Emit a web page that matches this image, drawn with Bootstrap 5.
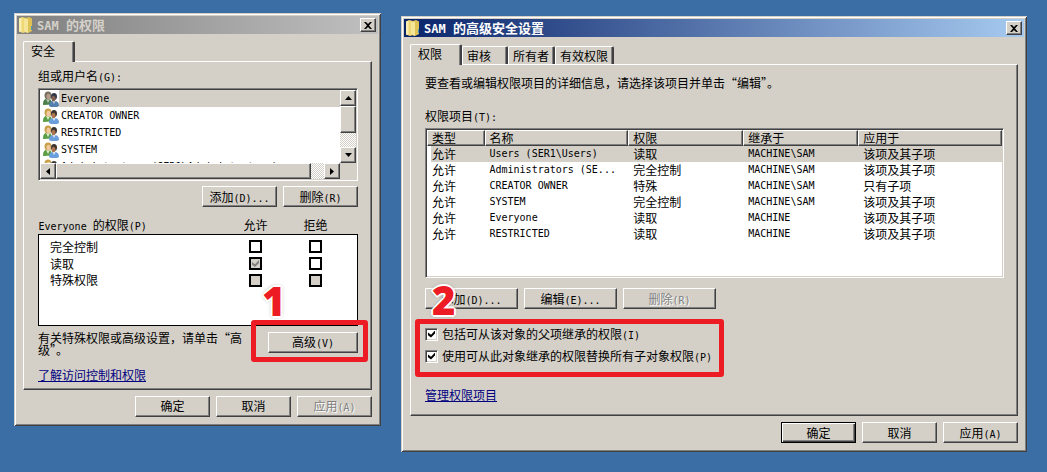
<!DOCTYPE html>
<html lang="zh-CN">
<head>
<meta charset="utf-8">
<meta name="viewport" content="width=device-width, initial-scale=1">
<title>SAM 的权限</title>
<link href="https://cdn.jsdelivr.net/npm/bootstrap@5.3.0/dist/css/bootstrap.min.css" rel="stylesheet">
<style>
  :root { --face:#d4d0c8; --mid:#808080; --dark:#404040; --red:#ed1c24; }
  body { background:#3a6ea5; color:#000; font-family:"Noto Sans CJK SC",sans-serif; font-size:12px; line-height:16px; }
  .desktop { display:grid; grid-template-columns:367fr 626fr; gap:20px; padding:13px 20px 19px 14px; align-items:start; }
  .latin { font-family:"DejaVu Sans Mono","Liberation Mono",monospace; font-size:10px; line-height:1; }
  .dialog { background:var(--face); padding:3px 3px 9px; border:0 solid; min-width:0;
    box-shadow:inset 1px 1px var(--face),inset -1px -1px var(--dark),inset 2px 2px #fff,inset -2px -2px var(--mid); }
  .dialog-second { margin-top:3px; }
  .titlebar { height:18px; padding:0 2px; font-size:13px; font-weight:700; color:var(--face); background:linear-gradient(90deg,#808080,#c0c0c0); }
  .titlebar .latin { font-size:12px; white-space:pre; }
  .titlebar.current { color:#fff; background:linear-gradient(90deg,#0a246a,#a6caf0); }
  .titlebar h1 { font:inherit; line-height:18px; }
  .folder { width:14px; height:16px; flex:none; }
  .closer { width:16px; height:14px; }
  .raised, .btn.raised { background:var(--face); color:#000; border:1px solid; border-color:#fff var(--dark) var(--dark) #fff;
    border-radius:0; box-shadow:inset -1px -1px var(--mid); padding:0; display:flex; align-items:center; justify-content:center; flex:none; }
  .btn.push { width:75px; height:21px; font-size:12px; line-height:16px; }
  .btn.push-mid { width:93px; }
  .btn.push-adv { width:90px; }
  .btn.raised:disabled { color:var(--mid); text-shadow:1px 1px #fff; opacity:1; border-color:#fff var(--dark) var(--dark) #fff; }
  .btn.preset { border-color:#000; box-shadow:inset 1px 1px #fff,inset -1px -1px var(--dark),inset -2px -2px var(--mid); }
  .tabs { margin:7px 6px 0; height:20px; }
  .tab-head { position:relative; background:var(--face); border:solid; border-width:1px 2px 0 1px; border-color:#fff var(--dark) #fff #fff;
    border-radius:2px 2px 0 0; margin:2px 0 0; padding:0 4px; min-width:46px; text-align:left; color:#000; box-shadow:inset -1px 0 var(--mid); }
  .tab-head.active { margin:0 0 -1px; padding:0 7px 2px; min-width:52px; z-index:1; }
  .pane { margin:0 6px 6px; border:1px solid; border-color:#fff var(--dark) var(--dark) #fff; box-shadow:inset -1px -1px var(--mid); padding:6px 13px 6px 14px; }
  .pane-wide { padding:10px 13px 12px 14px; }
  .sunken { background:#fff; border:1px solid; border-color:var(--mid) #fff #fff var(--mid);
    box-shadow:inset 1px 1px var(--dark),inset -1px -1px var(--face); padding:1px; }
  .users { height:73px; overflow:hidden; }
  .users li { height:17px; white-space:nowrap; display:flex; align-items:center; }
  .users li > span { flex:1; padding-left:2px; line-height:17px; }
  .users .chosen > span, .entries .chosen td { background:var(--face); }
  .users svg { width:16px; height:16px; margin-left:3px; flex:none; }
  .track { background:repeating-conic-gradient(#fff 0 25%,var(--face) 0 50%) 0 0/2px 2px; }
  .arrow { width:16px; height:16px; }
  .thumb-v { height:27px; }
  .thumb-h { height:16px; width:85%; }
  .corner { width:16px; background:var(--face); }
  .rights { width:100%; border-collapse:collapse; margin-top:9px; table-layout:fixed; }
  .rights th { font-weight:400; height:18px; padding:0; }
  .rights th:nth-child(n+2), .rights td { text-align:center; }
  .rights tbody th { padding-left:11px; height:17px; }
  .rights td { padding:0; height:17px; line-height:0; }
  .rights tbody { background:#fff; border:1px solid #000; }
  .rights col.mark-col { width:60px; }
  .rights col.end { width:12px; }
  .rights tbody tr:first-child > * { padding-top:4px; height:21px; }
  .rights tbody tr:last-child > * { padding-bottom:36px; height:53px; }
  .tick { appearance:none; width:13px; height:13px; margin:0; background:#fff; border:2px solid #000; display:inline-grid; place-items:center; flex:none; }
  .tick:disabled { background:var(--face); }
  .tick:checked::before { content:""; width:7px; height:7px; background:#000; clip-path:polygon(0 28%,43% 62%,100% 0,100% 43%,43% 100%,0 68%); }
  .tick:checked:disabled::before { background:var(--mid); }
  .tick-3d { border:1px solid; border-color:var(--mid) #fff #fff var(--mid); box-shadow:inset 1px 1px var(--dark),inset -1px -1px var(--face); }
  .hint { line-height:12px; max-width:210px; }
  .dialog a { color:#000080; }
  .ringed { position:relative; }
  .ringed::after { content:""; position:absolute; border:5px solid var(--red); border-radius:3px; pointer-events:none; inset:-12px -10px -9px -17px; }
  .ringed-wide { width:289px; max-width:100%; }
  .ringed-wide::after { inset:-7px -10px -13px; }
  .step { position:absolute; font:800 40px/40px "Open Sans",sans-serif; color:var(--red); z-index:2;
    text-shadow:2px 0 #fff,-2px 0 #fff,0 2px #fff,0 -2px #fff,1px 1px #fff,-1px -1px #fff,1px -1px #fff,-1px 1px #fff,0 0 4px #777; }
  .step-one { left:-6px; top:-51px; }
  .step-two { left:7px; top:-46px; }
  .listing { height:150px; margin-top:4px; }
  .entries { width:100%; table-layout:fixed; border-collapse:separate; border-spacing:0; }
  .entries th, .entries td { height:16px; line-height:16px; padding:0 0 0 5px; white-space:nowrap; overflow:hidden; font-weight:400; }
  .entries th { background:var(--face); border:1px solid; border-color:#fff var(--dark) var(--dark) #fff; box-shadow:inset -1px -1px var(--mid); padding-left:4px; line-height:14px; }
  .entries td:first-child { border-left:4px solid #fff; padding-left:1px; }
  .gap-6 { gap:6px; }
  .foot { padding:0 6px; }
  .after-list { margin-top:5px; }
  .after-rights { margin-top:6px; }
  .after-listing { margin-top:10px; }
  .mt-lead { margin-top:17px; }
  .mt-link { margin-top:11px; }
  .mt-link-wide { margin-top:23px; }
</style>
</head>
<body>
<svg class="d-none" aria-hidden="true">
  <symbol id="folder" viewBox="0 0 14 16">
    <path d="M0 1.500 3 0l4 1v14l-3 1-4-1.500z" fill="#eed873"/><path d="M0 1.500 2.500 1v14L0 14.500z" fill="#f8eeb0"/>
    <path d="M5 1.500 10 0l3 1.500V14l-4 2-4-1.500z" fill="#dfc255"/><path d="M5 1.500l4 .5v14l-4-1.500z" fill="#f5e596"/>
    <path d="M12 9h1v4h-1z" fill="#4f9bb5"/>
  </symbol>
  <symbol id="pair" viewBox="0 0 16 16">
    <path d="M0 14c0-4 1-6 4-6.500 3 0 5 1 5 6z" fill="#5c9e45"/><path d="M3 8l2 4 2-4z" fill="#dcecd0"/>
    <ellipse cx="5" cy="4.500" rx="3.500" ry="4" fill="#c8a048"/><ellipse cx="5.500" cy="5.500" rx="2" ry="2.800" fill="#f0c9a0"/>
    <path d="M6 15c0-4 2-5 5-5s5 1 5 5l-2 1H8z" fill="#6a9fdb"/><path d="M9.500 10l1.500 3 1.500-3z" fill="#e4effb"/>
    <ellipse cx="11" cy="5.500" rx="3" ry="3.500" fill="#3c3430"/><ellipse cx="10.500" cy="7.500" rx="2" ry="2.700" fill="#ad7650"/>
  </symbol>
  <symbol id="pair-dim" viewBox="0 0 16 16">
    <path d="M0 14c0-4 1-6 4-6.500 3 0 5 1 5 6z" fill="#4c7f4b"/><path d="M3 8l2 4 2-4z" fill="#b9c9b8"/>
    <ellipse cx="5" cy="4.500" rx="3.500" ry="4" fill="#77715f"/><ellipse cx="5.500" cy="5.500" rx="2" ry="2.800" fill="#b59c8b"/>
    <path d="M6 15c0-4 2-5 5-5s5 1 5 5l-2 1H8z" fill="#557fad"/><path d="M9.500 10l1.500 3 1.500-3z" fill="#c4d2e3"/>
    <ellipse cx="11" cy="5.500" rx="3" ry="3.500" fill="#343948"/><ellipse cx="10.500" cy="7.500" rx="2" ry="2.700" fill="#82604f"/>
  </symbol>
  <symbol id="cross" viewBox="0 0 8 7"><path d="M0 0h2l2 2 2-2h2L5 3.500 8 7H6L4 5 2 7H0l3-3.500z"/></symbol>
</svg>

<main class="desktop">
  <section class="dialog" aria-labelledby="t1">
    <header class="titlebar d-flex align-items-center">
      <svg class="folder me-1"><use href="#folder"/></svg>
      <h1 class="m-0 me-auto" id="t1"><span class="latin">SAM </span>的权限</h1>
      <button class="btn raised closer" aria-label="关闭"><svg width="8" height="7"><use href="#cross"/></svg></button>
    </header>
    <div class="tabs d-flex" role="tablist"><button class="tab-head active" role="tab">安全</button></div>
    <div class="pane">
      <div>组或用户名<span class="latin">(G):</span></div>
      <div class="sunken mt-1">
        <div class="d-flex">
          <ul class="users list-unstyled m-0 flex-grow-1">
            <li class="chosen"><svg><use href="#pair-dim"/></svg><span class="latin">Everyone</span></li>
            <li><svg><use href="#pair"/></svg><span class="latin">CREATOR OWNER</span></li>
            <li><svg><use href="#pair"/></svg><span class="latin">RESTRICTED</span></li>
            <li><svg><use href="#pair"/></svg><span class="latin">SYSTEM</span></li>
            <li><svg><use href="#pair"/></svg><span class="latin">Administrators (SER1\Administrators)</span></li>
          </ul>
          <div class="track d-flex flex-column">
            <button class="raised arrow" aria-label="向上"><svg width="7" height="4"><path d="M0 4 3.500 0 7 4z"/></svg></button>
            <div class="raised thumb-v"></div>
            <button class="raised arrow mt-auto" aria-label="向下"><svg width="7" height="4"><path d="M0 0h7L3.500 4z"/></svg></button>
          </div>
        </div>
        <div class="d-flex">
          <div class="track d-flex flex-grow-1">
            <button class="raised arrow" aria-label="向左"><svg width="4" height="7"><path d="M4 0v7L0 3.500z"/></svg></button>
            <div class="raised thumb-h"></div>
            <button class="raised arrow ms-auto" aria-label="向右"><svg width="4" height="7"><path d="M0 0v7l4-3.500z"/></svg></button>
          </div>
          <div class="corner"></div>
        </div>
      </div>
      <div class="d-flex justify-content-end gap-6 after-list">
        <button class="btn raised push"><span>添加<span class="latin">(D)...</span></span></button>
        <button class="btn raised push"><span>删除<span class="latin">(R)</span></span></button>
      </div>
      <table class="rights">
        <colgroup><col><col class="mark-col"><col class="mark-col"><col class="end"></colgroup>
        <thead><tr><th scope="col"><span class="latin">Everyone </span>的权限<span class="latin">(P)</span></th><th scope="col">允许</th><th scope="col">拒绝</th><td></td></tr></thead>
        <tbody>
          <tr><th scope="row">完全控制</th><td><input class="tick" type="checkbox" aria-label="完全控制 允许"></td><td><input class="tick" type="checkbox" aria-label="完全控制 拒绝"></td><td></td></tr>
          <tr><th scope="row">读取</th><td><input class="tick" type="checkbox" checked disabled aria-label="读取 允许"></td><td><input class="tick" type="checkbox" aria-label="读取 拒绝"></td><td></td></tr>
          <tr><th scope="row">特殊权限</th><td><input class="tick" type="checkbox" disabled aria-label="特殊权限 允许"></td><td><input class="tick" type="checkbox" disabled aria-label="特殊权限 拒绝"></td><td></td></tr>
        </tbody>
      </table>
      <div class="d-flex justify-content-between align-items-start after-rights">
        <div class="hint">有关特殊权限或高级设置，请单击“高级”。</div>
        <div class="ringed">
          <button class="btn raised push push-adv"><span>高级<span class="latin">(V)</span></span></button>
          <span class="step step-one">1</span>
        </div>
      </div>
      <div class="mt-link"><a href="#">了解访问控制和权限</a></div>
    </div>
    <footer class="d-flex justify-content-end gap-6 foot">
      <button class="btn raised push">确定</button>
      <button class="btn raised push">取消</button>
      <button class="btn raised push" disabled><span>应用<span class="latin">(A)</span></span></button>
    </footer>
  </section>

  <section class="dialog dialog-second" aria-labelledby="t2">
    <header class="titlebar current d-flex align-items-center">
      <svg class="folder me-1"><use href="#folder"/></svg>
      <h1 class="m-0 me-auto" id="t2"><span class="latin">SAM </span>的高级安全设置</h1>
      <button class="btn raised closer" aria-label="关闭"><svg width="8" height="7"><use href="#cross"/></svg></button>
    </header>
    <div class="tabs d-flex" role="tablist">
      <button class="tab-head active" role="tab">权限</button>
      <button class="tab-head" role="tab">审核</button>
      <button class="tab-head" role="tab">所有者</button>
      <button class="tab-head" role="tab">有效权限</button>
    </div>
    <div class="pane pane-wide">
      <div>要查看或编辑权限项目的详细信息，请选择该项目并单击“编辑”。</div>
      <div class="mt-lead">权限项目<span class="latin">(T):</span></div>
      <div class="sunken listing">
        <table class="entries">
          <colgroup><col style="width:10%"><col style="width:25%"><col style="width:20%"><col style="width:20%"><col style="width:25%"></colgroup>
          <thead><tr><th>类型</th><th>名称</th><th>权限</th><th>继承于</th><th>应用于</th></tr></thead>
          <tbody>
            <tr class="chosen"><td>允许</td><td class="latin">Users (SER1\Users)</td><td>读取</td><td class="latin">MACHINE\SAM</td><td>该项及其子项</td></tr>
            <tr><td>允许</td><td class="latin">Administrators (SE...</td><td>完全控制</td><td class="latin">MACHINE\SAM</td><td>该项及其子项</td></tr>
            <tr><td>允许</td><td class="latin">CREATOR OWNER</td><td>特殊</td><td class="latin">MACHINE\SAM</td><td>只有子项</td></tr>
            <tr><td>允许</td><td class="latin">SYSTEM</td><td>完全控制</td><td class="latin">MACHINE\SAM</td><td>该项及其子项</td></tr>
            <tr><td>允许</td><td class="latin">Everyone</td><td>读取</td><td class="latin">MACHINE</td><td>该项及其子项</td></tr>
            <tr><td>允许</td><td class="latin">RESTRICTED</td><td>读取</td><td class="latin">MACHINE</td><td>该项及其子项</td></tr>
          </tbody>
        </table>
      </div>
      <div class="d-flex gap-6 after-listing">
        <button class="btn raised push push-mid"><span>添加<span class="latin">(D)...</span></span></button>
        <button class="btn raised push push-mid"><span>编辑<span class="latin">(E)...</span></span></button>
        <button class="btn raised push push-mid" disabled><span>删除<span class="latin">(R)</span></span></button>
      </div>
      <div class="ringed ringed-wide d-flex flex-column gap-6 mt-lead">
        <span class="step step-two">2</span>
        <div class="d-flex align-items-center"><input class="tick tick-3d me-1" type="checkbox" id="inherit" checked><label for="inherit">包括可从该对象的父项继承的权限<span class="latin">(I)</span></label></div>
        <div class="d-flex align-items-center"><input class="tick tick-3d me-1" type="checkbox" id="replace" checked><label for="replace" class="text-nowrap">使用可从此对象继承的权限替换所有子对象权限<span class="latin">(P)</span></label></div>
      </div>
      <div class="mt-link-wide"><a href="#">管理权限项目</a></div>
    </div>
    <footer class="d-flex justify-content-end gap-6 foot">
      <button class="btn raised push preset">确定</button>
      <button class="btn raised push">取消</button>
      <button class="btn raised push"><span>应用<span class="latin">(A)</span></span></button>
    </footer>
  </section>
</main>
<script src="https://cdn.jsdelivr.net/npm/bootstrap@5.3.0/dist/js/bootstrap.bundle.min.js"></script>
</body>
</html>
